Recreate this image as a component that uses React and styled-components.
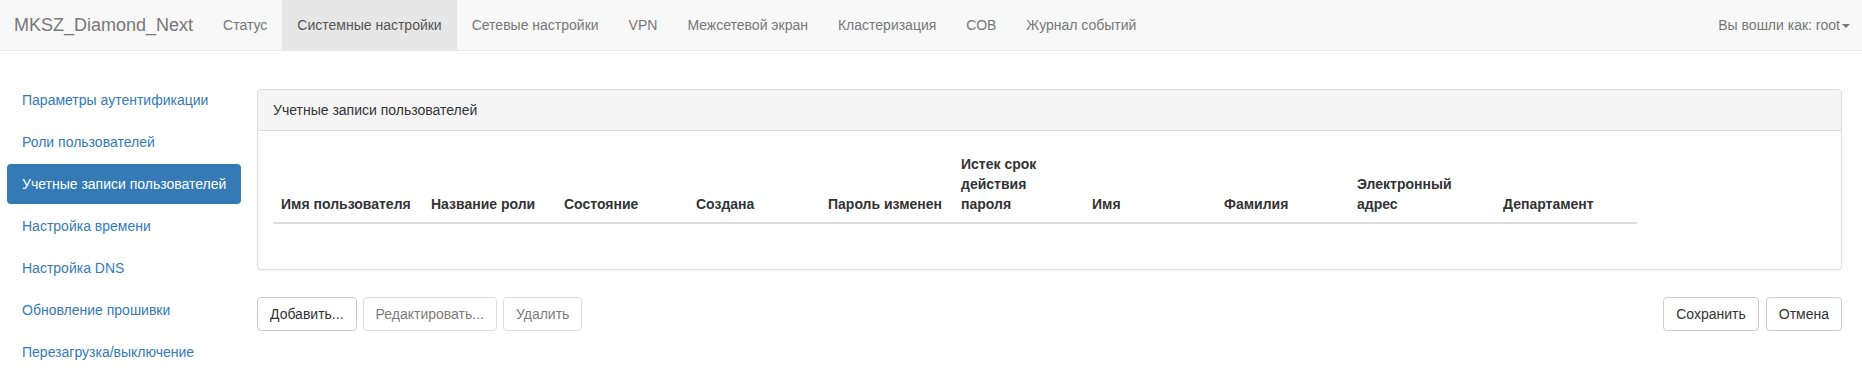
import React from "react";
import styled, { createGlobalStyle } from "styled-components";

const Global = createGlobalStyle`
  html, body { margin: 0; padding: 0; background: #fff; }
  body {
    font-family: "Liberation Sans", Arial, Helvetica, sans-serif;
    font-size: 14px;
    line-height: 20px;
    color: #333;
  }
  * { box-sizing: border-box; }
`;

const Navbar = styled.nav`
  display: flex;
  align-items: stretch;
  height: 51px;
  background: #f8f8f8;
  border-bottom: 1px solid #e7e7e7;
`;

const Brand = styled.a`
  display: block;
  padding: 15px 15px 15px 14px;
  font-size: 18px;
  line-height: 20px;
  color: #777;
  text-decoration: none;
`;

const NavList = styled.ul`
  display: flex;
  list-style: none;
  margin: 0;
  padding: 0;
  margin-left: ${(p) => (p.$right ? "auto" : "0")};
`;

const NavLink = styled.a`
  display: block;
  padding: ${(p) => (p.$right ? "15px 12px 15px 15px" : "15px")};
  height: 50px;
  color: ${(p) => (p.$active ? "#555" : "#777")};
  background: ${(p) => (p.$active ? "#e7e7e7" : "transparent")};
  text-decoration: none;
  white-space: nowrap;
`;

const Caret = styled.span`
  display: inline-block;
  width: 0;
  height: 0;
  margin-left: 2px;
  vertical-align: middle;
  border-top: 4px solid #777;
  border-right: 4px solid transparent;
  border-left: 4px solid transparent;
`;

const Main = styled.div`
  display: flex;
  align-items: flex-start;
  margin-top: 29px;
`;

const Sidebar = styled.ul`
  list-style: none;
  margin: 0 0 0 7px;
  padding: 0;
  width: 234px;
  flex: none;
  display: flex;
  flex-direction: column;
  gap: 2px;
`;

const SideLink = styled.a`
  display: block;
  height: 40px;
  padding: 10px 15px;
  border-radius: 4px;
  color: ${(p) => (p.$active ? "#fff" : "#337ab7")};
  background: ${(p) => (p.$active ? "#337ab7" : "transparent")};
  text-decoration: none;
  white-space: nowrap;
`;

const Content = styled.div`
  flex: 1;
  margin: 9px 20px 0 16px;
`;

const Panel = styled.div`
  border: 1px solid #ddd;
  border-radius: 4px;
  background: #fff;
  box-shadow: 0 1px 1px rgba(0, 0, 0, 0.05);
`;

const PanelHeading = styled.div`
  padding: 10px 15px;
  background: #f5f5f5;
  border-bottom: 1px solid #ddd;
  border-radius: 3px 3px 0 0;
  color: #333;
`;

const PanelBody = styled.div`
  padding: 15px 15px 14px 15px;
`;

const Table = styled.table`
  width: 1364px;
  border-collapse: collapse;
  border-spacing: 0;
  table-layout: fixed;
  margin-bottom: 31px;
`;

const Th = styled.th`
  padding: 8px;
  text-align: left;
  vertical-align: bottom;
  font-weight: bold;
  color: #333;
  border-bottom: 2px solid #ddd;
  line-height: 20px;
`;

const Actions = styled.div`
  display: flex;
  justify-content: space-between;
  margin-top: 27px;
`;

const Group = styled.div`
  display: flex;
  gap: ${(p) => p.$gap || 6}px;
`;

const Button = styled.button`
  font-family: inherit;
  font-size: 14px;
  line-height: 20px;
  height: 34px;
  padding: 6px 12px;
  color: #333;
  background: #fff;
  border: 1px solid #ccc;
  border-radius: 4px;
  cursor: pointer;
  opacity: ${(p) => (p.disabled ? 0.65 : 1)};
  &:disabled { cursor: not-allowed; }
`;

const topNav = [
  "Статус",
  "Системные настройки",
  "Сетевые настройки",
  "VPN",
  "Межсетевой экран",
  "Кластеризация",
  "СОВ",
  "Журнал событий",
];

const sideNav = [
  "Параметры аутентификации",
  "Роли пользователей",
  "Учетные записи пользователей",
  "Настройка времени",
  "Настройка DNS",
  "Обновление прошивки",
  "Перезагрузка/выключение",
];

const columns = [
  { w: 150, t: ["Имя пользователя"] },
  { w: 133, t: ["Название роли"] },
  { w: 132, t: ["Состояние"] },
  { w: 132, t: ["Создана"] },
  { w: 133, t: ["Пароль изменен"] },
  { w: 131, t: ["Истек срок", "действия", "пароля"] },
  { w: 132, t: ["Имя"] },
  { w: 133, t: ["Фамилия"] },
  { w: 146, t: ["Электронный", "адрес"] },
  { w: 142, t: ["Департамент"] },
];

export default function App() {
  return (
    <>
      <Global />
      <Navbar>
        <Brand href="#">MKSZ_Diamond_Next</Brand>
        <NavList>
          {topNav.map((n) => (
            <li key={n}>
              <NavLink href="#" $active={n === "Системные настройки"}>
                {n}
              </NavLink>
            </li>
          ))}
        </NavList>
        <NavList $right>
          <li>
            <NavLink href="#" $right>
              Вы вошли как: root<Caret />
            </NavLink>
          </li>
        </NavList>
      </Navbar>
      <Main>
        <Sidebar>
          {sideNav.map((n) => (
            <li key={n}>
              <SideLink href="#" $active={n === "Учетные записи пользователей"}>
                {n}
              </SideLink>
            </li>
          ))}
        </Sidebar>
        <Content>
          <Panel>
            <PanelHeading>Учетные записи пользователей</PanelHeading>
            <PanelBody>
              <Table>
                <colgroup>
                  {columns.map((c, i) => (
                    <col key={i} style={{ width: c.w }} />
                  ))}
                </colgroup>
                <thead>
                  <tr>
                    {columns.map((c, i) => (
                      <Th key={i}>
                        {c.t.map((line, j) => (
                          <React.Fragment key={j}>
                            {j > 0 && <br />}
                            {line}
                          </React.Fragment>
                        ))}
                      </Th>
                    ))}
                  </tr>
                </thead>
                <tbody />
              </Table>
            </PanelBody>
          </Panel>
          <Actions>
            <Group $gap={6}>
              <Button>Добавить...</Button>
              <Button disabled>Редактировать...</Button>
              <Button disabled>Удалить</Button>
            </Group>
            <Group $gap={7}>
              <Button>Сохранить</Button>
              <Button>Отмена</Button>
            </Group>
          </Actions>
        </Content>
      </Main>
    </>
  );
}
